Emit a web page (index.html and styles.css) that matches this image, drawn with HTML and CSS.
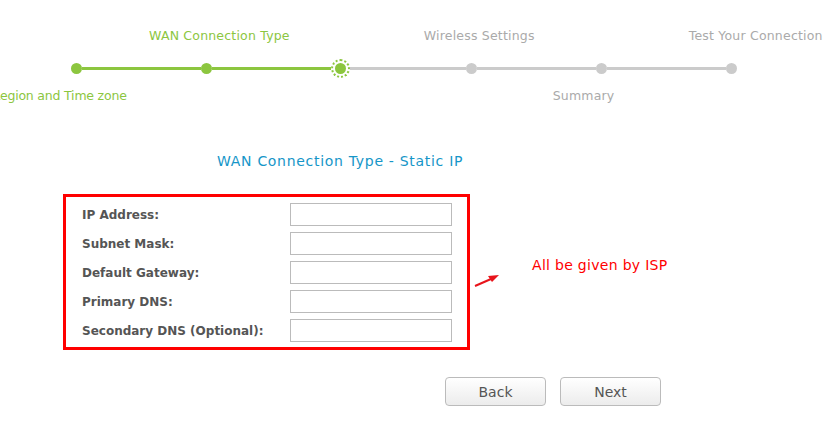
FILE: index.html
```html
<!DOCTYPE html>
<html lang="en">
<head>
    <meta charset="UTF-8">
    <title>Quick Setup - WAN Connection Type</title>
    <link rel="stylesheet" href="styles.css">
</head>
<body>
    <div class="steps">
        <div class="step-labels">
            <span class="label done wan">WAN Connection Type</span>
            <span class="label wireless">Wireless Settings</span>
            <span class="label test">Test Your Connection</span>
        </div>
        <div class="track">
            <span class="dot done"></span>
            <span class="seg done"></span>
            <span class="dot done"></span>
            <span class="seg done"></span>
            <span class="dot current"></span>
            <span class="seg short"></span>
            <span class="dot"></span>
            <span class="seg"></span>
            <span class="dot"></span>
            <span class="seg"></span>
            <span class="dot"></span>
        </div>
        <div class="step-labels lower">
            <span class="label done region">Region and Time zone</span>
            <span class="label summary">Summary</span>
        </div>
    </div>

    <h2 class="title">WAN Connection Type - Static IP</h2>

    <div class="form-row">
        <div class="fields">
            <div class="field">
                <label>IP Address:</label>
                <input type="text">
            </div>
            <div class="field">
                <label>Subnet Mask:</label>
                <input type="text">
            </div>
            <div class="field">
                <label>Default Gateway:</label>
                <input type="text">
            </div>
            <div class="field">
                <label>Primary DNS:</label>
                <input type="text">
            </div>
            <div class="field">
                <label>Secondary DNS (Optional):</label>
                <input type="text">
            </div>
        </div>
        <svg class="arrow" width="28" height="16" viewBox="0 0 28 16">
            <line x1="2" y1="14" x2="18" y2="7" stroke="#e8141b" stroke-width="2"/>
            <polygon points="26,3 15,4 19,10" fill="#e8141b"/>
        </svg>
        <p class="note">All be given by ISP</p>
    </div>

    <div class="buttons">
        <button type="button">Back</button>
        <button type="button">Next</button>
    </div>
</body>
</html>
```

FILE: styles.css
```css
body {
    margin: 0;
    font-family: "DejaVu Sans", Verdana, sans-serif;
    background: #fff;
    overflow: hidden;
}

.steps {
    padding-top: 29px;
}

.step-labels {
    display: flex;
    height: 14px;
    line-height: 14px;
    font-size: 12.5px;
    letter-spacing: 0.2px;
    white-space: nowrap;
}

.label {
    color: #aaa;
}

.label.done {
    color: #8cc63f;
}

.wan {
    margin-left: 149px;
}

.wireless {
    margin-left: 134px;
}

.test {
    margin-left: 154px;
}

.step-labels.lower {
    margin-top: 11px;
}

.region {
    margin-left: -8px;
    letter-spacing: -0.2px;
}

.summary {
    margin-left: 426px;
}

.track {
    display: flex;
    align-items: center;
    height: 19px;
    margin-top: 16px;
    padding-left: 71px;
}

.dot {
    width: 11px;
    height: 11px;
    border-radius: 50%;
    background: #cbcbcb;
    flex-shrink: 0;
}

.dot.done {
    background: #8cc63f;
}

.dot.current {
    padding: 2px;
    border: 2px dotted #8cc63f;
    background: #8cc63f;
    background-clip: content-box;
}

.seg {
    width: 119px;
    height: 3px;
    background: #cbcbcb;
}

.seg.done {
    background: #8cc63f;
}

.seg.short {
    width: 116px;
}

.title {
    margin: 50px 0 0 217px;
    font-size: 14px;
    letter-spacing: 0.7px;
    font-weight: normal;
    line-height: 16px;
    color: #1696c8;
}

.form-row {
    display: flex;
    align-items: flex-start;
    margin-top: 25px;
    padding-left: 63px;
}

.fields {
    width: 385px;
    border: 3px solid #f00;
    padding: 6px 0 5px 16px;
}

.field {
    display: flex;
    align-items: center;
    height: 23px;
    margin-bottom: 6px;
}

.field:last-child {
    margin-bottom: 0;
}

.field label {
    width: 208px;
    padding-top: 1px;
    font-size: 12px;
    font-weight: bold;
    color: #555;
}

.field input {
    width: 162px;
    height: 23px;
    box-sizing: border-box;
    border: 1px solid #bbb;
    margin: 0;
    padding: 2px 4px;
}

.arrow {
    margin: 78px 0 0 3px;
}

.note {
    margin: 63px 0 0 31px;
    font-size: 14px;
    letter-spacing: 0.3px;
    color: #f00;
    line-height: 16px;
}

.buttons {
    display: flex;
    gap: 14px;
    margin-top: 27px;
    padding-left: 445px;
}

.buttons button {
    width: 101px;
    height: 29px;
    padding: 0;
    border: 1px solid #bbb;
    border-radius: 4px;
    background: linear-gradient(#fff, #ececec);
    font-family: "DejaVu Sans", Verdana, sans-serif;
    font-size: 14px;
    color: #555;
}
```
